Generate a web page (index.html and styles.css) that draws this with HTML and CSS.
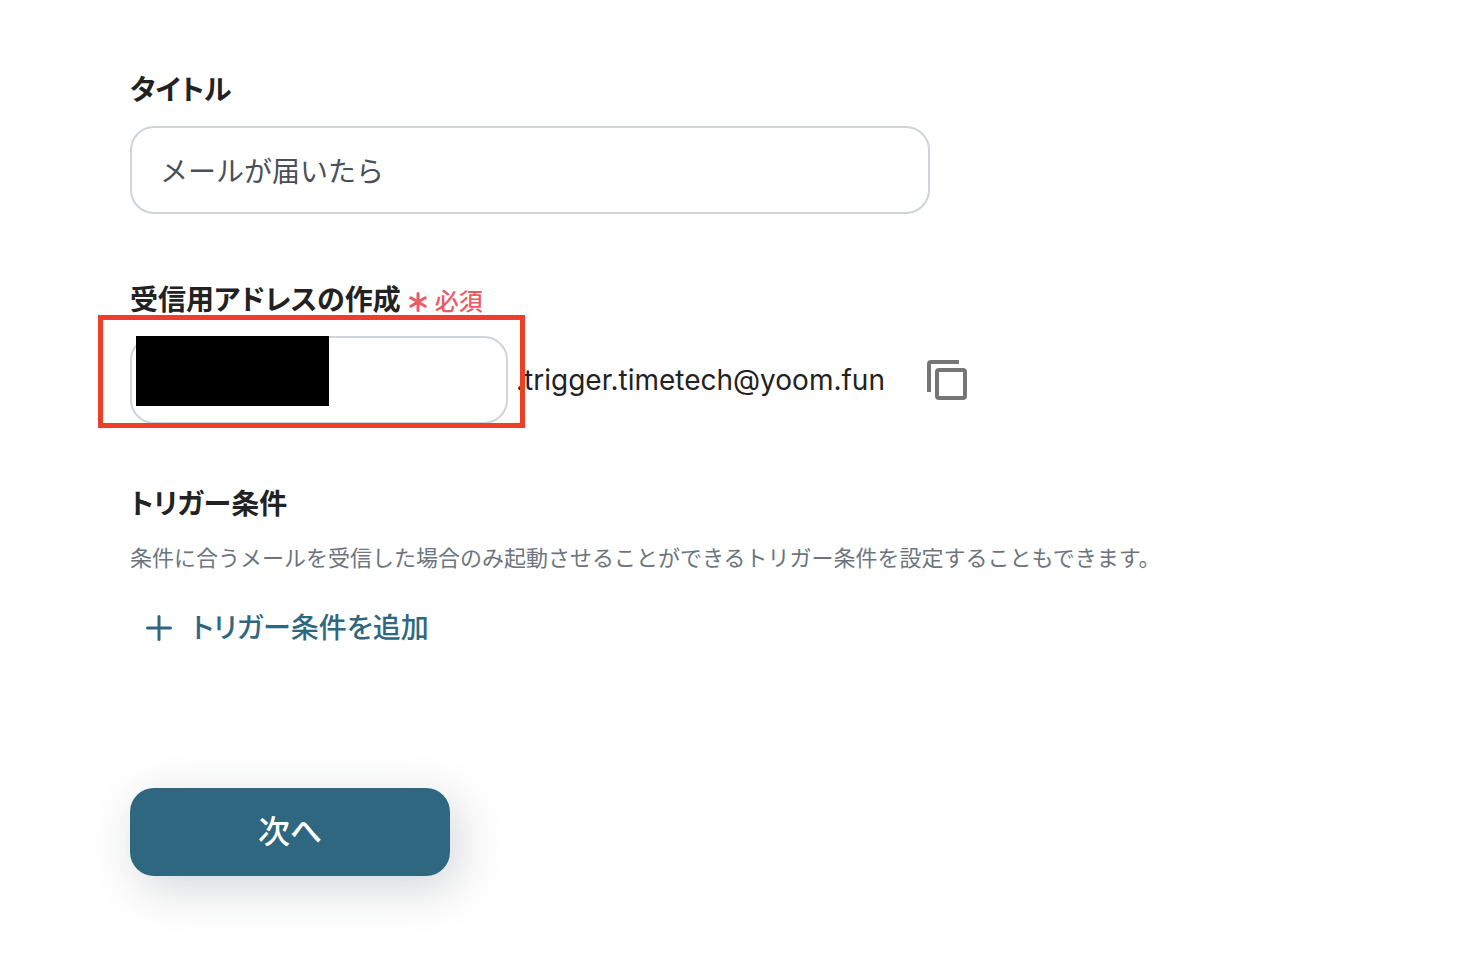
FILE: index.html
```html
<!DOCTYPE html>
<html lang="ja">
<head>
<meta charset="utf-8">
<meta name="viewport" content="width=device-width, initial-scale=1">
<title>トリガー設定</title>
<link rel="stylesheet" href="styles.css">
</head>
<body>
<form class="form">
  <div class="field">
    <label class="label" for="title">タイトル</label>
    <input class="input" id="title" type="text" value="メールが届いたら">
  </div>
  <div class="field address-field">
    <div class="label-row">
      <label class="label" for="address">受信用アドレスの作成</label>
      <span class="required">
        <svg class="asterisk" viewBox="0 0 18 20" aria-hidden="true"><path d="M9 1.500v17M1.800 5.800l14.400 8.400M16.200 5.800l-14.400 8.400"/></svg>
        必須
      </span>
    </div>
    <div class="address-row">
      <div class="address-box">
        <input class="input" id="address" type="text">
        <span class="redaction"></span>
        <span class="highlight"></span>
      </div>
      <span class="domain">.trigger.timetech@yoom.fun</span>
      <button class="copy" type="button" aria-label="コピー">
        <svg viewBox="0 0 40 40" aria-hidden="true"><path d="M2 32V4q0-2 2-2h28"/><rect x="10" y="10" width="28" height="28" rx="2"/></svg>
      </button>
    </div>
  </div>
  <section class="conditions">
    <h2 class="label">トリガー条件</h2>
    <p class="help">条件に合うメールを受信した場合のみ起動させることができるトリガー条件を設定することもできます。</p>
    <button class="add" type="button">
      <svg viewBox="0 0 26 26" aria-hidden="true"><path d="M13 1.500v23M1.500 13h23"/></svg>
      トリガー条件を追加
    </button>
  </section>
  <button class="next" type="button">次へ</button>
</form>
</body>
</html>
```
FILE: styles.css
```css
* { box-sizing: border-box; }
body {
  margin: 0;
  background: #fff;
  color: #222;
  font-family: Inter, "Noto Sans CJK JP", sans-serif;
  font-size: 28px;
}
button, input { font: inherit; }
.form {
  display: flex;
  flex-direction: column;
  align-items: flex-start;
  padding: 70px 130px 84px;
}
.field {
  display: flex;
  flex-direction: column;
  align-items: flex-start;
  gap: 16px;
  width: 100%;
}
.label {
  margin: 0;
  font-size: 28px;
  font-weight: 600;
  font-feature-settings: "palt";
  line-height: 40px;
}
.input {
  width: 100%;
  max-width: 800px;
  height: 88px;
  padding: 0 28px;
  border: 2px solid #ced4da;
  border-radius: 24px;
  background: #fff;
  color: #495057;
}
.address-field { margin-top: 66px; }
.label-row { display: flex; align-items: center; gap: 8px; }
.required {
  display: flex;
  align-items: center;
  gap: 8px;
  padding-top: 4px;
  color: #ec5a62;
  font-size: 24px;
  font-weight: 500;
  line-height: 36px;
}
.asterisk {
  width: 18px;
  height: 20px;
  fill: none;
  stroke: currentColor;
  stroke-width: 3;
  stroke-linecap: round;
}
.address-row { display: flex; align-items: center; }
.address-box { position: relative; width: 378px; margin-right: 8px; }
.redaction {
  position: absolute;
  top: 0;
  left: 6px;
  width: 193px;
  height: 70px;
  background: #000;
}
.highlight {
  position: absolute;
  inset: -21px -17px -4px -32px;
  border: 5px solid #ec4026;
  pointer-events: none;
}
.copy {
  display: flex;
  margin-left: 42px;
  padding: 0;
  border: 0;
  background: none;
  color: #757575;
}
.copy svg { width: 40px; height: 40px; fill: none; stroke: currentColor; stroke-width: 4; }
.conditions { margin-top: 60px; }
.help {
  margin: 16px 0 0;
  color: #6c757d;
  font-size: 22px;
  line-height: 36px;
}
.add {
  display: flex;
  align-items: center;
  gap: 20px;
  margin-top: 32px;
  padding: 0 16px;
  border: 0;
  background: none;
  color: #2f6780;
  font-feature-settings: "palt";
  font-weight: 500;
  line-height: 40px;
}
.add svg { width: 26px; height: 26px; fill: none; stroke: currentColor; stroke-width: 3; stroke-linecap: round; }
.next {
  width: 320px;
  height: 88px;
  padding: 0 0 6px;
  margin-top: 140px;
  border: 0;
  border-radius: 24px;
  background: #2f6780;
  box-shadow: 8px 12px 48px rgba(33, 43, 54, 0.2);
  color: #fff;
  font-size: 32px;
  font-weight: 500;
}
```
